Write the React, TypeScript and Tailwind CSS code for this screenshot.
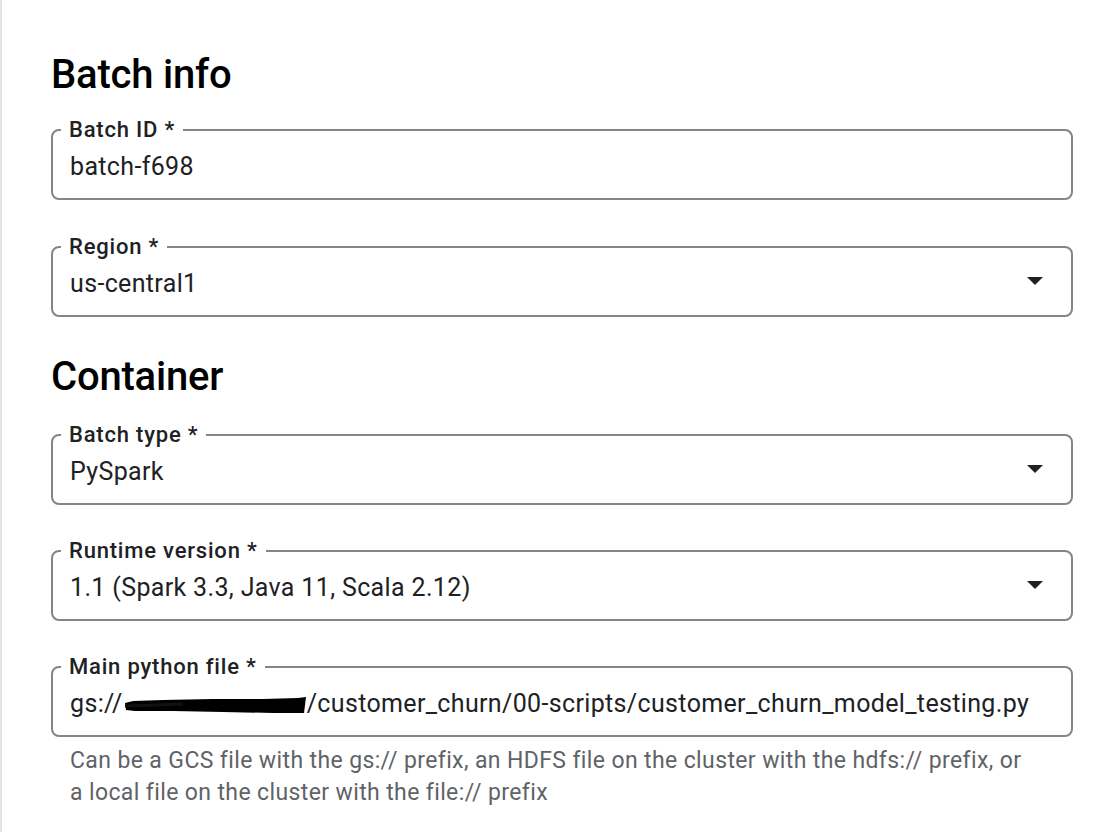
import React from 'react';

const font = { fontFamily: 'Roboto, "Noto Sans", Arial, sans-serif' };

const DropArrow = () => (
  <svg width="16" height="8" viewBox="0 0 16 8" className="shrink-0 mb-[6px]">
    <path d="M0 0 L16 0 L8 8 Z" fill="#202124" />
  </svg>
);

const Redacted = () => (
  <svg width="184" height="22" viewBox="0 0 184 22" className="inline-block align-[-4px]">
    <path
      d="M2 9 L10 7 L40 6 L90 5 L140 5 L175 4 L183 3 L181 19 L150 19 L100 18 L50 17 L12 17 L3 16 Z"
      fill="#000"
    />
    <path d="M2 12 L60 10" stroke="#111" strokeWidth="3" />
  </svg>
);

interface FieldProps {
  label: string;
  select?: boolean;
  children: React.ReactNode;
}

const Field: React.FC<FieldProps> = ({ label, select, children }) => (
  <fieldset className="border-2 border-[#80868b] rounded-[8px] pl-[17px] pr-[28px] min-w-0">
    <legend className="-ml-[9px] px-[8px] text-[22px] leading-[26px] font-medium tracking-[0.8px] text-[#202124]">
      {label}
    </legend>
    <div className="flex items-center justify-between h-[32px] mt-[8px] mb-[15px] text-[25px] leading-[32px] tracking-[0.35px] text-[#202124] whitespace-nowrap">
      <div>{children}</div>
      {select && <DropArrow />}
    </div>
  </fieldset>
);

export default function App() {
  return (
    <div
      className="min-h-screen w-[1118px] bg-white border-l-2 border-[#e3e3e3] pl-[49px] pr-[45px] pt-[51px]"
      style={font}
    >
      <h2 className="text-[40px] leading-[48px] font-medium text-[#000] tracking-[-0.2px]">Batch info</h2>

      <div className="mt-[18px] flex flex-col gap-[34px]">
        <Field label="Batch ID *">batch-f698</Field>
        <Field label="Region *" select>us-central1</Field>
      </div>

      <h2 className="mt-[36px] text-[40px] leading-[48px] font-medium text-[#000] tracking-[-0.2px]">Container</h2>

      <div className="mt-[21px] flex flex-col gap-[33px]">
        <Field label="Batch type *" select>PySpark</Field>
        <Field label="Runtime version *" select>1.1 (Spark 3.3, Java 11, Scala 2.12)</Field>
        <div>
          <Field label="Main python file *">
            gs://<Redacted />/customer_churn/00-scripts/customer_churn_model_testing.py
          </Field>
          <p className="pl-[19px] pr-[48px] pt-[8px] text-[23px] leading-[32px] tracking-[0.38px] text-[#5f6368]">
            Can be a GCS file with the gs:// prefix, an HDFS file on the cluster with the hdfs:// prefix, or a
            local file on the cluster with the file:// prefix
          </p>
        </div>
      </div>
    </div>
  );
}
